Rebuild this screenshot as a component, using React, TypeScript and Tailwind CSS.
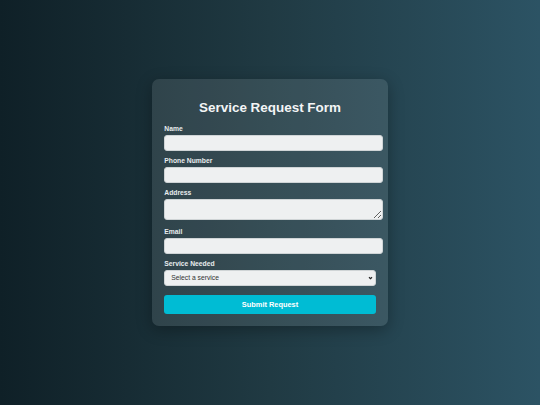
import { useState } from 'react'

const labelCls =
  'block text-[6.75px] font-bold leading-[7.76px] mb-[1.9px] text-[#e8ecee]'
const fieldCls =
  'block w-[calc(100%+7.6px)] rounded-[3px] border border-[#cfd4d6] bg-[#eef0f1] px-[3.8px] text-[6.75px] text-[#333] outline-none'

export default function App() {
  const [service, setService] = useState('')

  return (
    <div
      className="flex h-[405px] w-full items-center justify-center bg-gradient-to-r from-[#0f2027] via-[#203a43] to-[#2c5364]"
      style={{ fontFamily: '"Liberation Sans", Arial, sans-serif' }}
    >
      <form
        className="w-[236px] rounded-[7px] bg-white/10 px-[12.3px] pt-[12.3px] pb-[12.4px] shadow-[0_4px_16px_rgba(0,0,0,0.3)]"
        onSubmit={(e) => e.preventDefault()}
      >
        <h2 className="mt-[8.5px] mb-[9.8px] text-center text-[13.45px] font-bold leading-[15.45px] text-[#f3f5f6]">
          Service Request Form
        </h2>

        <label className={labelCls}>Name</label>
        <input type="text" className={`${fieldCls} mb-[6.4px] h-[16px]`} />

        <label className={labelCls}>Phone Number</label>
        <input type="tel" className={`${fieldCls} mb-[6.4px] h-[16px]`} />

        <label className={labelCls}>Address</label>
        <textarea className={`${fieldCls} mb-[8.4px] h-[21px]`} />

        <label className={labelCls}>Email</label>
        <input type="email" className={`${fieldCls} mb-[6.4px] h-[16px]`} />

        <label className={labelCls}>Service Needed</label>
        <div className="relative">
          <select
            value={service}
            onChange={(e) => setService(e.target.value)}
            className="block h-[16.7px] w-full appearance-none rounded-[3px] border border-[#cfd4d6] bg-[#eef0f1] pl-[6px] pr-4 text-[6.75px] text-[#333] outline-none"
          >
            <option value="">Select a service</option>
            <option value="plumbing">Plumbing</option>
            <option value="electrical">Electrical</option>
            <option value="cleaning">Cleaning</option>
          </select>
          <svg
            className="pointer-events-none absolute top-1/2 right-[2.5px] h-[5px] w-[5px] -translate-y-1/2"
            viewBox="0 0 10 10"
            fill="none"
            stroke="#222"
            strokeWidth="2.4"
          >
            <path d="M2 3.5 L5 6.5 L8 3.5" />
          </svg>
        </div>

        <button
          type="submit"
          className="mt-[8.3px] block h-[19px] w-full rounded-[3px] bg-[#00bcd4] text-[7.4px] font-bold text-white"
        >
          Submit Request
        </button>
      </form>
    </div>
  )
}
